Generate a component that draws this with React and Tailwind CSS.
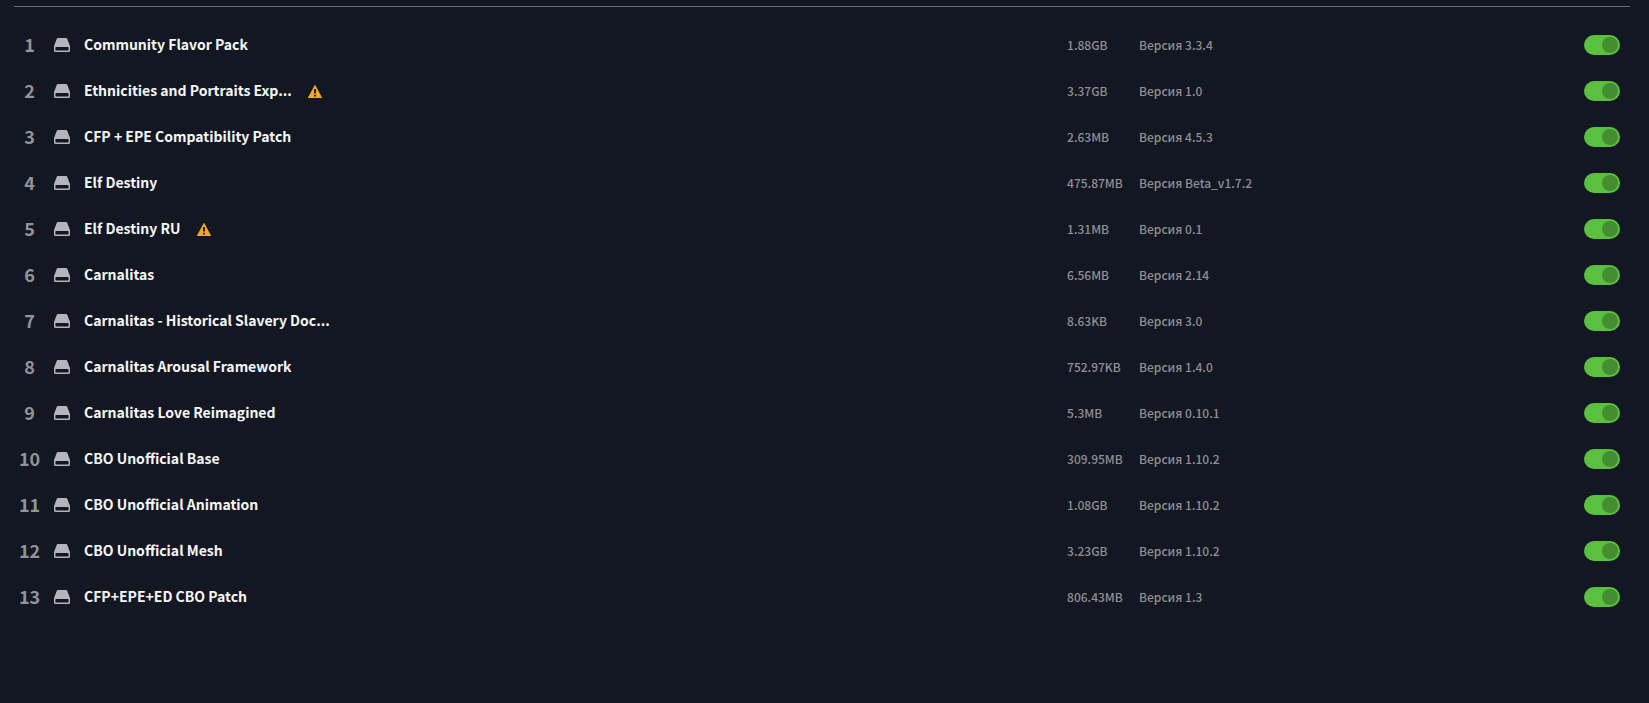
import { useState } from "react";

const initialMods = [
  { name: "Community Flavor Pack", size: "1.88GB", version: "3.3.4" },
  { name: "Ethnicities and Portraits Exp...", size: "3.37GB", version: "1.0", warning: true },
  { name: "CFP + EPE Compatibility Patch", size: "2.63MB", version: "4.5.3" },
  { name: "Elf Destiny", size: "475.87MB", version: "Beta_v1.7.2" },
  { name: "Elf Destiny RU", size: "1.31MB", version: "0.1", warning: true },
  { name: "Carnalitas", size: "6.56MB", version: "2.14" },
  { name: "Carnalitas - Historical Slavery Doc...", size: "8.63KB", version: "3.0" },
  { name: "Carnalitas Arousal Framework", size: "752.97KB", version: "1.4.0" },
  { name: "Carnalitas Love Reimagined", size: "5.3MB", version: "0.10.1" },
  { name: "CBO Unofficial Base", size: "309.95MB", version: "1.10.2" },
  { name: "CBO Unofficial Animation", size: "1.08GB", version: "1.10.2" },
  { name: "CBO Unofficial Mesh", size: "3.23GB", version: "1.10.2" },
  { name: "CFP+EPE+ED CBO Patch", size: "806.43MB", version: "1.3" },
];

const DriveIcon = () => (
  <svg viewBox="0 0 16 14" className="w-4 h-3.5 shrink-0" fill="#b4b5ba" aria-hidden="true">
    <path
      fillRule="evenodd"
      d="M4.5 0h7c1 0 1.700.5 2 1.400L15.800 7.500q.2.6.2 1.200V12.400a1.600 1.600 0 0 1-1.600 1.600H1.600A1.600 1.600 0 0 1 0 12.400V8.700q0-.6.2-1.200L2.500 1.400C2.800.5 3.500 0 4.500 0zM2.200 9a.8.8 0 0 0-.8.800v2a.8.8 0 0 0 .8.800h11.600a.8.8 0 0 0 .8-.8v-2a.8.8 0 0 0-.8-.8z"
    />
  </svg>
);

const WarningIcon = () => (
  <svg viewBox="0 0 14 13" className="w-3.5 h-[13px] shrink-0" role="img" aria-label="Warning">
    <path d="M6.500.400Q7-.3 7.500.400L14 12.500q.1.500-.3.500H.3q-.4 0-.3-.5z" fill="#f5a623" />
    <path d="M6.100 4h1.800v4.500H6.100zM6.100 9.700h1.800v1.800H6.100z" fill="#131722" />
  </svg>
);

const Toggle = ({ label, checked, onChange }) => (
  <input
    type="checkbox"
    role="switch"
    aria-label={label}
    checked={checked}
    onChange={onChange}
    className="appearance-none flex items-center w-9 h-5 p-0.5 rounded-full shrink-0 cursor-pointer bg-gray-600 before:block before:size-4 before:rounded-full before:bg-gray-800 checked:bg-[#5bbf40] checked:before:ml-auto checked:before:bg-[#448e31]"
  />
);

const ModRow = ({ index, mod, enabled, onToggle }) => (
  <li className="flex items-center h-[46px] pl-0.5 pr-2.5">
    <span className="w-[27px] pb-0.5 text-center text-lg leading-6 font-bold text-[#92949b]">
      {index}
    </span>
    <span className="ml-[11px] mr-3.5">
      <DriveIcon />
    </span>
    <div className="flex flex-[16] items-center gap-4 min-w-0">
      <span className="truncate pb-0.5 text-sm leading-6 font-bold text-[#f7f7f8]">
        {mod.name}
      </span>
      {mod.warning && <WarningIcon />}
    </div>
    <div className="flex flex-[9] items-center text-xs leading-5 font-medium text-[#8e9096]">
      <span className="w-[72px] shrink-0">{mod.size}</span>
      <span className="flex-1">Версия {mod.version}</span>
      <Toggle label={mod.name} checked={enabled} onChange={onToggle} />
    </div>
  </li>
);

export default function App() {
  const [disabled, setDisabled] = useState([]);

  const toggleMod = (name) => {
    setDisabled((prev) =>
      prev.includes(name) ? prev.filter((n) => n !== name) : [...prev, name]
    );
  };

  return (
    <main className="min-h-screen bg-[#131722] pl-3.5 pr-[19px] pt-1.5 font-['Noto_Sans_CJK_SC','Noto_Sans',sans-serif]">
      <ul className="border-t border-[#6b6b78] pt-[15px]">
        {initialMods.map((mod, idx) => (
          <ModRow
            key={mod.name}
            index={idx + 1}
            mod={mod}
            enabled={!disabled.includes(mod.name)}
            onToggle={() => toggleMod(mod.name)}
          />
        ))}
      </ul>
    </main>
  );
}
